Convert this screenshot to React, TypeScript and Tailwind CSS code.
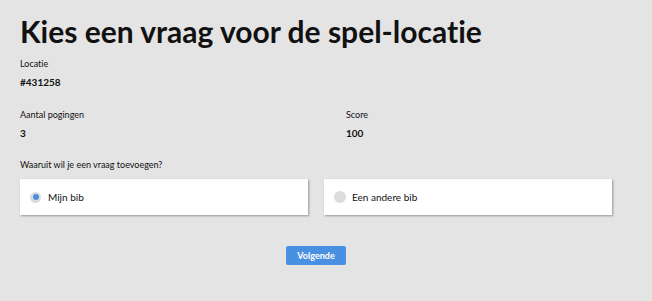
export default function App() {
  return (
    <div className="min-h-[301px] w-[652px] bg-[#e4e4e4] pl-5 pt-[13px] font-['Lato',sans-serif] text-[#111] [font-variant-ligatures:none]">
      <h1 className="text-[30px] font-bold leading-[37px]">
        Kies een vraag voor de spel-locatie
      </h1>

      <div className="mt-[8px] text-[9px] leading-[12px]">Locatie</div>
      <div className="mt-[6px] text-[10px] font-bold leading-[12px]">#431258</div>

      <div className="mt-[21px] grid grid-cols-[326px_1fr]">
        <div>
          <div className="text-[9px] leading-[12px]">Aantal pogingen</div>
          <div className="mt-[6px] text-[10px] font-bold leading-[12px]">3</div>
        </div>
        <div>
          <div className="text-[9px] leading-[12px]">Score</div>
          <div className="mt-[6px] text-[10px] font-bold leading-[12px]">100</div>
        </div>
      </div>

      <div className="mt-[20px] text-[9px] leading-[12px]">Waaruit wil je een vraag toevoegen?</div>

      <div className="mt-[8px] flex w-[592px] gap-4">
        <label className="flex h-[36px] flex-1 items-center bg-white pl-[10px] shadow-[1px_1px_2px_rgba(0,0,0,0.35)]">
          <span className="flex size-[11px] items-center justify-center rounded-full bg-[#dcdcdc]">
            <span className="size-[6px] rounded-full bg-[#4a8fe0]" />
          </span>
          <span className="ml-[7px] text-[10px] leading-[12px]">Mijn bib</span>
        </label>
        <label className="flex h-[36px] flex-1 items-center bg-white pl-[10px] shadow-[1px_1px_2px_rgba(0,0,0,0.35)]">
          <span className="size-[12px] rounded-full bg-[#dcdcdc]" />
          <span className="ml-[6px] text-[10px] leading-[12px]">Een andere bib</span>
        </label>
      </div>

      <div className="mt-[31px] flex w-[592px] justify-center">
        <button className="h-[19px] w-[60px] rounded-[2px] bg-[#4a90e2] text-[9px] font-bold text-white">
          Volgende
        </button>
      </div>
    </div>
  );
}
